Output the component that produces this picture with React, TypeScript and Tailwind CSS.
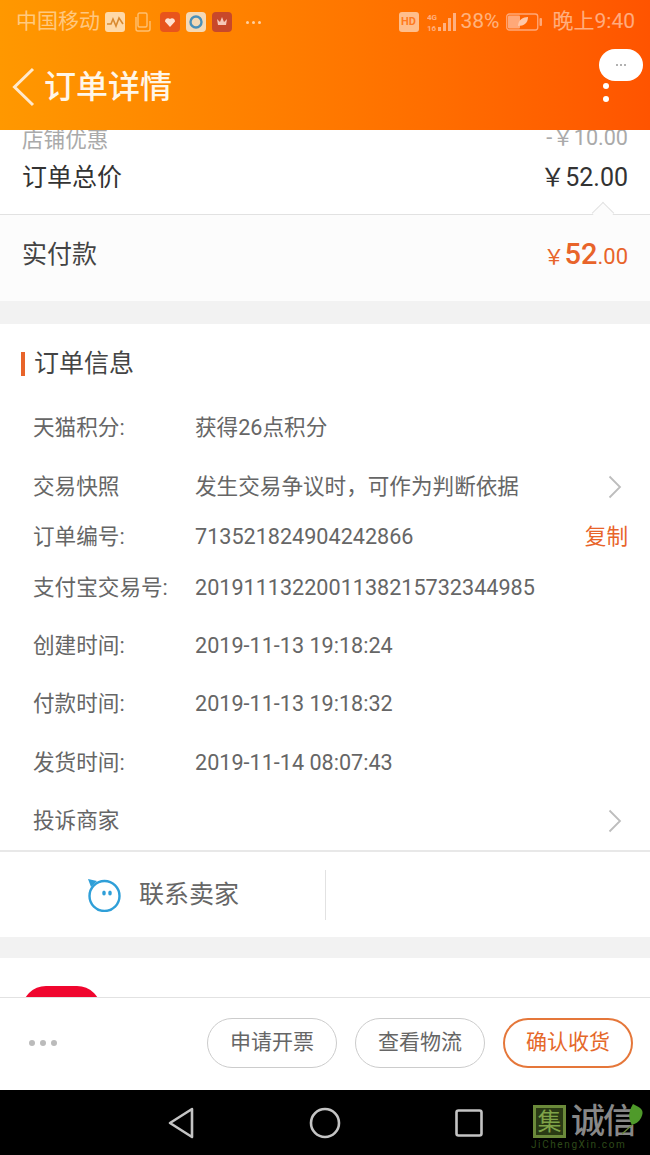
const font = { fontFamily: '"Roboto","Noto Sans CJK SC",sans-serif' };

function Chevron() {
  return (
    <svg width="14" height="24" viewBox="0 0 14 24" fill="none" stroke="#bdbdbd" strokeWidth="1.8">
      <path d="M1.5 1.5 L12 12 L1.5 22.5" />
    </svg>
  );
}

function Row({ h, label, children, right }: { h: string; label: string; children?: React.ReactNode; right?: React.ReactNode }) {
  return (
    <div className={`flex items-center pl-[33px] pr-[22px] text-[21.6px] text-[#666] ${h}`}>
      <span className="w-[162px] shrink-0 whitespace-nowrap">{label}</span>
      <span className="flex-1 whitespace-nowrap text-[#666]">{children}</span>
      {right}
    </div>
  );
}

function StatusBar() {
  return (
    <div className="flex h-[44px] items-center justify-between pl-[16px] pr-[15px] text-[21px] text-white/50">
      <div className="flex items-center gap-[5px]">
        <span>中国移动</span>
        <svg width="20" height="20" viewBox="0 0 20 20">
          <rect width="20" height="20" rx="3" fill="#ffd9a8" />
          <path d="M2 12 L6 12 L8 7 L11 14 L14 6 L18 12" fill="none" stroke="#d98a30" strokeWidth="1.6" />
        </svg>
        <svg width="20" height="20" viewBox="0 0 20 20" fill="none" stroke="#ffc070" strokeWidth="1.4" className="ml-[3px]">
          <rect x="5" y="1" width="9" height="14" rx="1.5" />
          <path d="M3 5 V17 a2 2 0 0 0 2 2 H15 a2 2 0 0 0 2-2 V9" />
        </svg>
        <div className="ml-[2px] flex h-[20px] w-[20px] items-center justify-center rounded-[4px] bg-[#e8541c]">
          <svg width="12" height="12" viewBox="0 0 12 12"><path d="M6 11 L1 5.5 A3 3 0 0 1 6 3 A3 3 0 0 1 11 5.5 Z" fill="#ffe0d0" /></svg>
        </div>
        <div className="ml-[1px] flex h-[20px] w-[20px] items-center justify-center rounded-[4px] bg-[#f5d9b5]">
          <svg width="16" height="16" viewBox="0 0 16 16" fill="none"><circle cx="8" cy="8" r="5.5" stroke="#4a90b8" strokeWidth="2.4" /></svg>
        </div>
        <div className="ml-[1px] flex h-[20px] w-[20px] items-center justify-center rounded-[4px] bg-[#c8482a]">
          <svg width="14" height="12" viewBox="0 0 14 12"><path d="M7 1 L9 6 L12 3 L11 9 L3 9 L2 3 L5 6 Z" fill="#f5c8b8" /></svg>
        </div>
        <div className="ml-[9px] flex gap-[3px]">
          <i className="h-[3px] w-[3px] rounded-full bg-[#ffd0a0]" />
          <i className="h-[3px] w-[3px] rounded-full bg-[#ffd0a0]" />
          <i className="h-[3px] w-[3px] rounded-full bg-[#ffd0a0]" />
        </div>
      </div>
      <div className="flex items-center">
        <div className="mr-[8px] flex h-[20px] w-[20px] items-center justify-center rounded-[3px] bg-[#ffbe8c] text-[11px] font-bold text-[#ff7a20]">HD</div>
        <svg width="32" height="20" viewBox="0 0 32 20" fill="#ffb080">
          <text x="0" y="8" fontSize="8" fontWeight="700">4G</text>
          <text x="0" y="19" fontSize="8" fontWeight="700">16</text>
          <rect x="11" y="15" width="3" height="4" /><rect x="16" y="11" width="3" height="8" />
          <rect x="21" y="6" width="3" height="13" /><rect x="26" y="1" width="3" height="18" />
        </svg>
        <span className="ml-[2px]">38%</span>
        <svg width="36" height="18" viewBox="0 0 36 18" className="ml-[6px]">
          <rect x="0.75" y="1" width="31" height="16" rx="2.5" fill="none" stroke="#ffa878" strokeWidth="1.3" />
          <rect x="2" y="2.5" width="12" height="13" rx="1" fill="#ffa878" />
          <path d="M12 13 C12 7 17 4 22 4 C22 10 18 13 12 13 Z" fill="#ffc8a8" />
          <rect x="33.5" y="5" width="2.5" height="8" rx="1" fill="#ffa878" />
        </svg>
        <span className="ml-[11px]">晚上9:40</span>
      </div>
    </div>
  );
}

export default function App() {
  return (
    <div className="flex h-[1155px] w-[650px] flex-col overflow-hidden bg-white" style={font}>
      <header className="relative h-[130px] shrink-0 bg-gradient-to-r from-[#ff9800] to-[#ff5400]">
        <StatusBar />
        <div className="flex h-[86px] items-center pl-[12px]">
          <svg width="23" height="40" viewBox="0 0 23 40" fill="none" stroke="#ffe9cc" strokeWidth="3">
            <path d="M21 2 L2.5 20 L21 38" />
          </svg>
          <span className="ml-[9px] text-[32px] font-medium leading-none text-[#fff6e8]">订单详情</span>
        </div>
        <div className="absolute left-[599px] top-[49px] flex h-[32px] w-[44px] items-center justify-center gap-[2px] rounded-[16px] bg-white">
          <i className="h-[2px] w-[2px] rounded-full bg-[#999]" />
          <i className="h-[2px] w-[2px] rounded-full bg-[#999]" />
          <i className="h-[2px] w-[2px] rounded-full bg-[#999]" />
        </div>
        <i className="absolute left-[603px] top-[83px] h-[6px] w-[6px] rounded-full bg-white" />
        <i className="absolute left-[603px] top-[96px] h-[6px] w-[6px] rounded-full bg-white" />
      </header>

      <main className="h-[867px] shrink-0 overflow-hidden">
        <div className="flex h-[20px] items-center justify-between px-[22px] text-[21.6px] text-[#aaa]">
          <span>店铺优惠</span>
          <span className="-mt-[4px]">-￥10.00</span>
        </div>
        <div className="relative flex h-[65px] items-center justify-between border-b border-[#e2e2e2] px-[22px] pb-[8px] text-[#333]">
          <span className="text-[25px]">订单总价</span>
          <span className="text-[25px]">￥52.00</span>
          <span className="absolute bottom-[-7px] right-[39px] h-[16px] w-[16px] rotate-45 border-l border-t border-[#e2e2e2] bg-[#fcfcfc]" />
        </div>
        <div className="flex h-[86px] items-center justify-between bg-[#fcfcfc] px-[22px] pb-[6px]">
          <span className="text-[25px] text-[#444]">实付款</span>
          <span className="flex items-baseline text-[#e8642a]">
            <span className="text-[21px]">￥</span>
            <span className="text-[29px] font-medium">52</span>
            <span className="text-[22px]">.00</span>
          </span>
        </div>
        <div className="h-[23px] bg-[#f2f2f2]" />

        <div className="flex h-[80px] items-center pl-[21px]">
          <i className="h-[24px] w-[4px] bg-[#e8642a]" />
          <span className="ml-[9px] text-[25px] text-[#444]">订单信息</span>
        </div>
        <Row h="h-[48px]" label="天猫积分:">获得26点积分</Row>
        <Row h="h-[70px]" label="交易快照" right={<span className="mr-[6px] flex"><Chevron /></span>}>发生交易争议时，可作为判断依据</Row>
        <Row h="h-[30px]" label="订单编号:" right={<span className="text-[#e8642a]">复制</span>}>713521824904242866</Row>
        <Row h="h-[72px]" label="支付宝交易号:">20191113220011382157323449​85</Row>
        <Row h="h-[44px]" label="创建时间:">2019-11-13 19:18:24</Row>
        <Row h="h-[73px]" label="付款时间:">2019-11-13 19:18:32</Row>
        <Row h="h-[44px]" label="发货时间:">2019-11-14 08:07:43</Row>
        <Row h="h-[72px]" label="投诉商家" right={<span className="mr-[6px] flex"><Chevron /></span>} />

        <div className="-mt-[7px] flex h-[87px] items-center border-t-2 border-[#e8e8e8]">
          <div className="flex h-[50px] w-[326px] items-center border-r border-[#e2e2e2] pl-[87px]">
            <svg width="34" height="34" viewBox="0 0 34 34" fill="none">
              <circle cx="17.5" cy="18" r="15" stroke="#2f9fd8" strokeWidth="2.4" />
              <path d="M1 1 L10 3 L4 9 Z" fill="#2f9fd8" />
              <ellipse cx="17" cy="15" rx="1.8" ry="2.6" fill="#2f9fd8" />
              <ellipse cx="23" cy="15" rx="1.8" ry="2.6" fill="#2f9fd8" />
            </svg>
            <span className="ml-[18px] text-[25px] text-[#666]">联系卖家</span>
          </div>
        </div>
        <div className="h-[21px] bg-[#f2f2f2]" />
        <div className="ml-[22px] mt-[28px] h-[30px] w-[79px] rounded-t-[24px] bg-[#f0062e]" />
      </main>

      <footer className="flex h-[93px] shrink-0 items-center border-t border-[#e2e2e2] pl-[29px] pr-[17px] pb-[2px]">
        <div className="flex gap-[5px]">
          <i className="h-[6px] w-[6px] rounded-full bg-[#bbb]" />
          <i className="h-[6px] w-[6px] rounded-full bg-[#bbb]" />
          <i className="h-[6px] w-[6px] rounded-full bg-[#bbb]" />
        </div>
        <div className="ml-auto flex gap-[18px] text-[21px]">
          <button className="h-[50px] w-[130px] rounded-full border border-[#ccc] text-[#666]">申请开票</button>
          <button className="h-[50px] w-[130px] rounded-full border border-[#ccc] text-[#666]">查看物流</button>
          <button className="h-[50px] w-[130px] rounded-full border-2 border-[#e5773a] text-[#e5682a]">确认收货</button>
        </div>
      </footer>

      <nav className="relative flex h-[65px] shrink-0 items-center bg-black pl-[168px]">
        <svg width="26" height="32" viewBox="0 0 26 32" fill="none" stroke="#c4c4c4" strokeWidth="2.6" strokeLinejoin="round">
          <path d="M24 2 L2 16 L24 30 Z" />
        </svg>
        <svg width="32" height="32" viewBox="0 0 32 32" fill="none" stroke="#c4c4c4" strokeWidth="2.6" className="ml-[115px]">
          <circle cx="16" cy="16" r="14" />
        </svg>
        <svg width="28" height="28" viewBox="0 0 28 28" fill="none" stroke="#c4c4c4" strokeWidth="2.6" className="ml-[114px]">
          <rect x="1.5" y="1.5" width="25" height="25" rx="2" />
        </svg>
        <div className="absolute left-[533px] top-[15px] flex h-[33px] w-[33px] items-center justify-center border-[3px] border-[#6b8a3a] bg-[#2a3a14] text-[24px] leading-none text-[#7fa348]">集</div>
        <span className="absolute left-[571px] top-[13px] whitespace-nowrap text-[34px] font-medium leading-[36px] tracking-[-2px] text-[#888]">诚信</span>
        <svg width="26" height="34" viewBox="0 0 26 34" className="absolute left-[621px] top-[12px]">
          <path d="M12 2 C20 6 24 8 20 16 C18 20 14 22 11 23 C8 18 6 12 12 2 Z" fill="#4f9a2a" />
          <path d="M11 23 L1 32" stroke="#6b8a3a" strokeWidth="1.2" />
        </svg>
        <span className="absolute left-[531px] top-[49px] whitespace-nowrap text-[10px] leading-[12px] tracking-[1.6px] text-[#2f4a1a]">JiChengXin.com</span>
      </nav>
    </div>
  );
}
